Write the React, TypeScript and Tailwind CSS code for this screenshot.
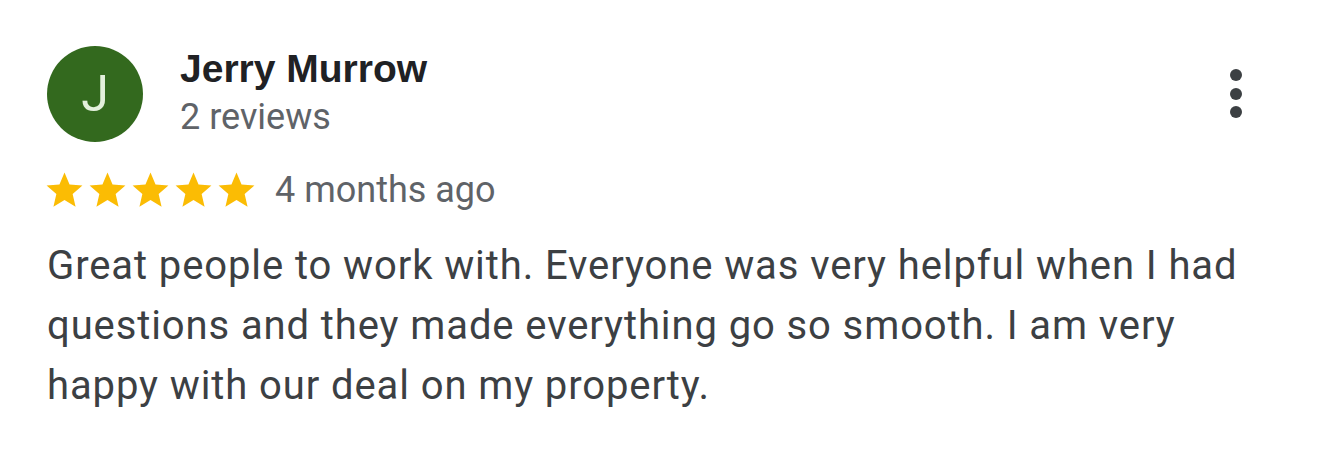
import React from "react";

const STAR_PATH =
  "M12 17.27L18.18 21l-1.64-7.03L22 9.24l-7.19-.61L12 2 9.19 8.63 2 9.24l5.46 4.73L5.82 21z";

function Star() {
  return (
    <svg viewBox="0 0 24 24" className="w-[43px] h-[43px] shrink-0" fill="#fbbc04">
      <path d={STAR_PATH} />
    </svg>
  );
}

export default function App() {
  return (
    <div
      className="w-[1320px] h-[450px] bg-white pl-[47px] pr-[60px] pt-[46px] overflow-hidden"
      style={{ fontFamily: "Roboto, 'Noto Sans', sans-serif" }}
    >
      {/* Header: avatar, name, menu */}
      <div className="flex items-start">
        <div className="w-[96px] h-[96px] rounded-full bg-[#33691e] flex items-center justify-center shrink-0">
          <span className="text-[50px] leading-none text-[#e3f0dc] font-normal">J</span>
        </div>
        <div className="ml-[37px] pt-[1px]">
          <div className="text-[39px] leading-[44px] font-bold text-[#202124] font-['Liberation_Sans',Arial,sans-serif]">
            Jerry Murrow
          </div>
          <div className="mt-[6px] text-[36px] leading-[40px] text-[#5f6368]">2 reviews</div>
        </div>
        <div className="ml-auto mt-[23px] mr-[18px] flex flex-col items-center gap-[6.5px]">
          <span className="w-[12px] h-[12px] rounded-full bg-[#3c4043]" />
          <span className="w-[12px] h-[12px] rounded-full bg-[#3c4043]" />
          <span className="w-[12px] h-[12px] rounded-full bg-[#3c4043]" />
        </div>
      </div>

      {/* Rating row */}
      <div className="mt-[28px] flex items-center h-[40px]">
        <div className="flex -ml-[4px]">
          <Star />
          <Star />
          <Star />
          <Star />
          <Star />
        </div>
        <span className="ml-[17px] text-[36px] leading-[40px] text-[#5f6368]">4 months ago</span>
      </div>

      {/* Review body */}
      <p className="mt-[26px] text-[40px] leading-[60px] tracking-[0.9px] text-[#3c4043] max-w-[1215px]">
        Great people to work with. Everyone was very helpful when I had questions and they made
        everything go so smooth. I am very happy with our deal on my property.
      </p>
    </div>
  );
}
